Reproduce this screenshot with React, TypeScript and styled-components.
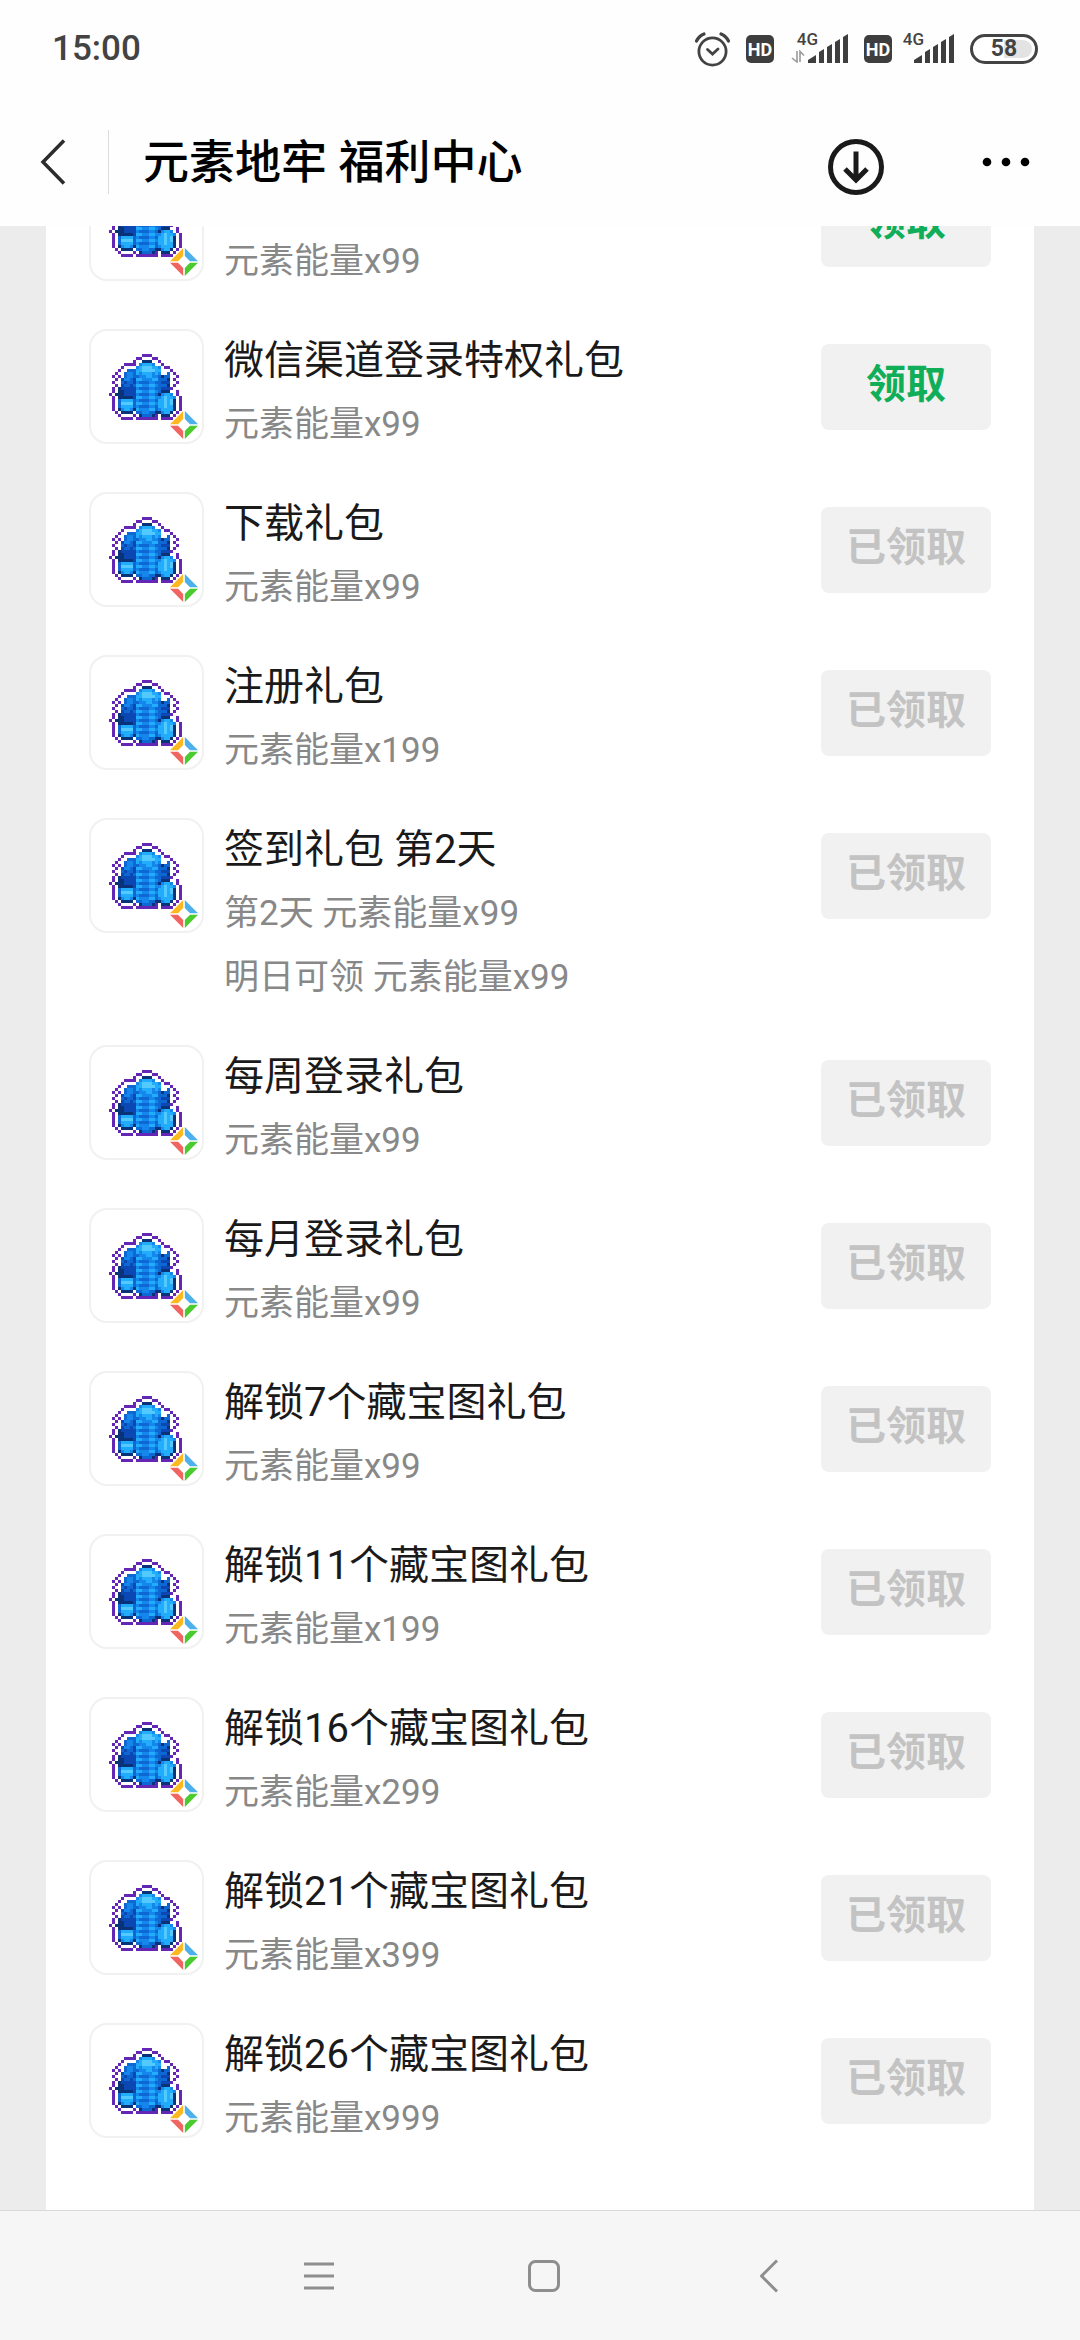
import React from "react";
import styled, { createGlobalStyle } from "styled-components";

const GlobalStyle = createGlobalStyle`
  * { box-sizing: border-box; }
  body {
    margin: 0;
    background: #ececec;
    font-family: Roboto, "Noto Sans CJK SC", sans-serif;
    color: #1a1a1a;
  }
  button {
    margin: 0;
    padding: 0;
    border: 0;
    background: none;
    font: inherit;
    color: inherit;
  }
  svg { display: block; }
`;

const Screen = styled.div`
  display: flex;
  flex-direction: column;
  height: 100vh;
`;

const TopBar = styled.header`
  flex: none;
  background: #fefefe;
`;

const StatusBar = styled.div`
  display: flex;
  align-items: center;
  justify-content: space-between;
  height: 98px;
  padding: 0 42px 0 52px;
  color: #434343;
`;

const Clock = styled.time`
  font-size: 35px;
  font-weight: 500;
  line-height: 40px;
`;

const StatusIcons = styled.div`
  display: flex;
  align-items: center;
  gap: 16px;
`;

const HdBadge = styled.span`
  display: flex;
  align-items: center;
  justify-content: center;
  width: 28px;
  height: 28px;
  border-radius: 5px;
  background: #3e3e3e;
  color: #fff;
  font-size: 18px;
  font-weight: 700;
`;

const SignalBox = styled.div<{ $wide?: boolean }>`
  position: relative;
  display: flex;
  align-items: flex-end;
  justify-content: flex-end;
  width: ${(p) => (p.$wide ? 58 : 52)}px;
  height: 32px;
  margin-left: ${(p) => (p.$wide ? 0 : -6)}px;
  padding-bottom: 2px;
`;

const NetLabel = styled.span`
  position: absolute;
  right: 30px;
  top: -3px;
  font-size: 17px;
  line-height: 18px;
  font-weight: 500;
`;

const Battery = styled.span`
  display: flex;
  align-items: center;
  justify-content: center;
  width: 68px;
  height: 30px;
  border: 3px solid #434343;
  border-radius: 15px;
  background: linear-gradient(90deg, #fff 50%, #e3e3e3 50%) content-box;
  padding: 3px;
  font-size: 23px;
  line-height: 24px;
  font-weight: 700;
`;

const TitleBar = styled.div`
  display: flex;
  align-items: center;
  height: 128px;
  padding-right: 48px;
`;

const BackButton = styled.button`
  display: flex;
  align-items: center;
  width: 109px;
  height: 64px;
  padding-left: 40px;
  border-right: 1px solid #dcdcdc;
`;

const PageTitle = styled.h1`
  flex: 1;
  margin: 0;
  padding-left: 34px;
  font-size: 46px;
  font-weight: 500;
  line-height: 64px;
  color: #000;
`;

const TitleActions = styled.div`
  display: flex;
  align-items: center;
  gap: 94px;
`;

const Scroller = styled.main`
  flex: 1;
  min-height: 0;
  overflow: hidden;
  padding: 0 46px;
`;

const GiftList = styled.ul`
  min-height: 100%;
  margin: -60px 0 0;
  padding: 0 43px 60px;
  list-style: none;
  background: #fff;
`;

const GiftRow = styled.li`
  display: flex;
  align-items: flex-start;
  gap: 20px;
  padding-bottom: 35px;
`;

const GiftIcon = styled.div`
  position: relative;
  flex: none;
  width: 115px;
  height: 115px;
  padding: 23px 0 0 18px;
  border: 2px solid #f1f1f1;
  border-radius: 18px;
`;

const GiftBadge = styled.span`
  position: absolute;
  right: 4px;
  bottom: 3px;
`;

const GiftText = styled.div`
  flex: 1;
  min-width: 0;
`;

const GiftName = styled.h2`
  height: 64px;
  margin: 0;
  font-size: 40px;
  font-weight: 400;
  line-height: 64px;
`;

const GiftDetail = styled.p`
  margin: 0;
  font-size: 35px;
  line-height: 64px;
  color: #888;
`;

const ClaimButton = styled.button<{ $ready?: boolean }>`
  flex: none;
  width: 170px;
  height: 86px;
  margin-top: 15px;
  padding-bottom: 5px;
  border-radius: 8px;
  background: #f1f1f1;
  font-size: 40px;
  font-weight: 700;
  line-height: 60px;
  color: ${(p) => (p.$ready ? "#10ae58" : "#c3c3c3")};
`;

const NavBar = styled.nav`
  flex: none;
  display: flex;
  justify-content: center;
  height: 130px;
  padding-left: 8px;
  border-top: 1px solid #dadada;
  background: #f6f6f6;
`;

const NavButton = styled.button`
  display: flex;
  align-items: center;
  justify-content: center;
  width: 225px;
`;

const COLOURS: Record<string, string> = {
  P: "#6426b4",
  N: "#0a3278",
  D: "#0b48b4",
  B: "#0d68d4",
  M: "#1486ec",
  C: "#22acfc",
  L: "#52caff",
};

const SPRITE = [
  "...........PPP..........",
  ".........PP...PP........",
  "........P..NNN..P.......",
  ".....PPPP.MCCCM..P......",
  "....P....MCLLLCCM.PP....",
  "...P..BBBCCLLLLCC...P...",
  "..P..BMMBCMCCCMCM..B.P..",
  ".P.P.BMMBBMMCCMMBNBB..P.",
  "..P.DMMBDCCMMMCCBBBN.P..",
  ".P..BDBBDMBBBMMBBDDD..P.",
  "..P.DBBDBCCMMCCMBBBN.P..",
  ".P.NDDDDDMBBBMMBBDDDP...",
  ".P.NNDDDDCCMMCCMBNNN..P.",
  "P.NNNDDDDMBBBMMBNMCCM.P.",
  ".P.NNNNNDCCMMCCMMCLCCM.P",
  ".P.BCCCCBMBBBMMBCCLCLN.P",
  ".P.BLLLLBCCMMCCMCCLCLN.P",
  ".P.BCCCCBMBBBMMBCCLCCN.P",
  ".P.NMCCMNCMMMCCBMCCCCN.P",
  "..P.NNNN.BBMMBBNNMCCN.P.",
  "...P....P.NBBBNP.NNN.P..",
  "....PPPP.PPPPPPP.PPPP...",
];

const SPRITE_PATHS = Object.keys(COLOURS).map((key) => {
  let d = "";
  SPRITE.forEach((row, y) => {
    for (let x = 0; x < row.length; x++) {
      if (row[x] === key) d += `M${x} ${y}h1v1h-1z`;
    }
  });
  return { key, d };
});

const CoinSprite = () => (
  <svg width="73" height="66" viewBox="0 0 24 22" preserveAspectRatio="none" shapeRendering="crispEdges" aria-hidden="true">
    {SPRITE_PATHS.map(({ key, d }) => (
      <path key={key} d={d} fill={COLOURS[key]} />
    ))}
  </svg>
);

const ColourMark = () => (
  <svg width="28" height="28" viewBox="0 0 28 28" aria-hidden="true">
    <path d="M0 13.2 13.2 0v8L8 13.2z" fill="#fbb91f" />
    <path d="M28 13.2 14.8 0v8l5.200 5.200z" fill="#4db0ea" />
    <path d="M0 14.8 13.2 28v-8L8 14.8z" fill="#f06461" />
    <path d="M28 14.8 14.8 28v-8l5.200-5.200z" fill="#4bcb30" />
  </svg>
);

const AlarmIcon = () => (
  <svg width="35" height="35" viewBox="0 0 35 35" fill="none" stroke="#434343" aria-hidden="true">
    <circle cx="17.5" cy="19.5" r="13.6" strokeWidth="2.8" />
    <path d="M12.5 17.5l5 4.5 5.5-5" strokeWidth="2.8" strokeLinecap="round" />
    <path d="M1.5 9Q4 4 9 2M33.500 9Q31 4 26 2" strokeWidth="3.200" strokeLinecap="round" />
  </svg>
);

const Signal = ({ arrows }: { arrows?: boolean }) => (
  <SignalBox $wide={arrows}>
    <NetLabel>4G</NetLabel>
    <svg width={arrows ? 58 : 52} height="29" viewBox={arrows ? "-18 0 58 29" : "-12 0 52 29"} aria-hidden="true">
      {arrows && (
        <path d="M-11 17v11l-5-4M-8 28V17.500l4 4" fill="none" stroke="#9a9a9a" strokeWidth="1.600" />
      )}
      <g fill="#3e3e3e">
        <path d="M0 29v-3l8-5v8z" />
        <path d="M11 29V18l5-3v14z" />
        <path d="M19 29V13l5-3v19z" />
        <path d="M27 29V8l5-3v24z" />
        <path d="M35 29V3l5-3v29z" />
      </g>
    </svg>
  </SignalBox>
);

interface Gift {
  id: string;
  name?: string;
  details: string[];
  ready?: boolean;
}

const gifts: Gift[] = [
  { id: "top", details: ["元素能量x99"], ready: true },
  { id: "wechat", name: "微信渠道登录特权礼包", details: ["元素能量x99"], ready: true },
  { id: "download", name: "下载礼包", details: ["元素能量x99"] },
  { id: "register", name: "注册礼包", details: ["元素能量x199"] },
  { id: "checkin", name: "签到礼包 第2天", details: ["第2天 元素能量x99", "明日可领 元素能量x99"] },
  { id: "weekly", name: "每周登录礼包", details: ["元素能量x99"] },
  { id: "monthly", name: "每月登录礼包", details: ["元素能量x99"] },
  { id: "map7", name: "解锁7个藏宝图礼包", details: ["元素能量x99"] },
  { id: "map11", name: "解锁11个藏宝图礼包", details: ["元素能量x199"] },
  { id: "map16", name: "解锁16个藏宝图礼包", details: ["元素能量x299"] },
  { id: "map21", name: "解锁21个藏宝图礼包", details: ["元素能量x399"] },
  { id: "map26", name: "解锁26个藏宝图礼包", details: ["元素能量x999"] },
];

export default function App() {
  return (
    <Screen>
      <GlobalStyle />
      <TopBar>
        <StatusBar>
          <Clock>15:00</Clock>
          <StatusIcons>
            <AlarmIcon />
            <HdBadge>HD</HdBadge>
            <Signal arrows />
            <HdBadge>HD</HdBadge>
            <Signal />
            <Battery>58</Battery>
          </StatusIcons>
        </StatusBar>
        <TitleBar>
          <BackButton>
            <svg width="26" height="46" viewBox="0 0 26 46" fill="none" stroke="#2c2c2c" strokeWidth="3.500" aria-hidden="true">
              <path d="M24 1.500 3 23l21 21.500" />
            </svg>
          </BackButton>
          <PageTitle>元素地牢 福利中心</PageTitle>
          <TitleActions>
            <button>
              <svg width="56" height="66" viewBox="0 -10 56 66" fill="none" stroke="#1a1a1a" strokeWidth="5" aria-hidden="true">
                <circle cx="28" cy="28" r="25.500" />
                <path d="M28 12.500v28M17 30l11 11 11-11" />
              </svg>
            </button>
            <button>
              <svg width="54" height="20" viewBox="0 0 54 20" aria-hidden="true">
                <circle cx="9" cy="10" r="4.300" />
                <circle cx="28" cy="10" r="4.300" />
                <circle cx="47" cy="10" r="4.300" />
              </svg>
            </button>
          </TitleActions>
        </TitleBar>
      </TopBar>
      <Scroller>
        <GiftList>
          {gifts.map((gift) => (
            <GiftRow key={gift.id}>
              <GiftIcon>
                <CoinSprite />
                <GiftBadge>
                  <ColourMark />
                </GiftBadge>
              </GiftIcon>
              <GiftText>
                <GiftName>{gift.name}</GiftName>
                {gift.details.map((line) => (
                  <GiftDetail key={line}>{line}</GiftDetail>
                ))}
              </GiftText>
              <ClaimButton $ready={gift.ready}>{gift.ready ? "领取" : "已领取"}</ClaimButton>
            </GiftRow>
          ))}
        </GiftList>
      </Scroller>
      <NavBar>
        <NavButton>
          <svg width="30" height="28" viewBox="0 0 30 28" stroke="#8e8e8e" strokeWidth="3" aria-hidden="true">
            <path d="M0 2h30M0 14h30M0 26h30" />
          </svg>
        </NavButton>
        <NavButton>
          <svg width="32" height="32" viewBox="0 0 32 32" fill="none" stroke="#8e8e8e" strokeWidth="3" aria-hidden="true">
            <rect x="1.500" y="1.500" width="29" height="29" rx="6" />
          </svg>
        </NavButton>
        <NavButton>
          <svg width="20" height="34" viewBox="0 0 20 34" fill="none" stroke="#8e8e8e" strokeWidth="3" strokeLinejoin="round" aria-hidden="true">
            <path d="M18 1.500 2.500 17 18 32.500" />
          </svg>
        </NavButton>
      </NavBar>
    </Screen>
  );
}
